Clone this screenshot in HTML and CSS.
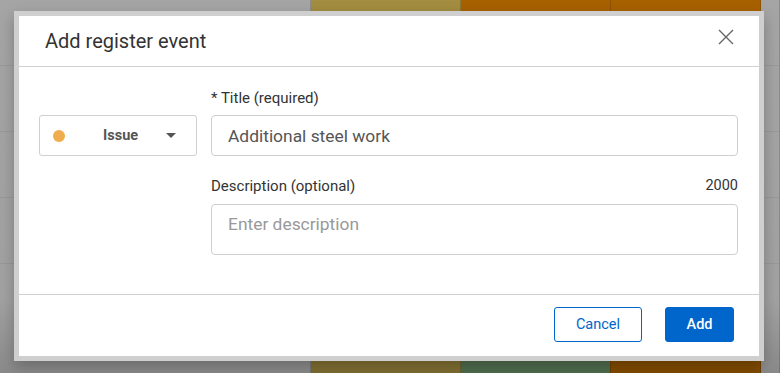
FILE: index.html
```html
<!DOCTYPE html>
<html lang="en">
<head>
    <meta charset="UTF-8">
    <meta name="viewport" content="width=device-width, initial-scale=1.0">
    <title>Add register event</title>
    <link rel="stylesheet" href="styles.css">
</head>
<body>

    <!-- Board behind the dialog -->
    <div class="board">
        <div class="lane lane-gray">
            <div class="cell"></div><div class="cell"></div><div class="cell"></div><div class="cell"></div>
        </div>
        <div class="lane lane-olive"></div>
        <div class="lane lane-orange"><div class="lane-foot foot-green"></div></div>
        <div class="lane lane-orange"><div class="lane-foot foot-orange"></div></div>
        <div class="lane lane-gray">
            <div class="cell"></div><div class="cell"></div><div class="cell"></div><div class="cell"></div>
        </div>
    </div>

    <div class="dialog-frame">
        <div class="dialog">
            <div class="dialog-header">
                <h2>Add register event</h2>
                <button class="close" aria-label="Close">
                    <svg width="16" height="16" viewBox="0 0 16 16">
                        <path d="M1 1 L15 15 M15 1 L1 15" stroke="#666" stroke-width="1.4" fill="none"/>
                    </svg>
                </button>
            </div>

            <form class="dialog-body" id="eventForm">
                <div class="type-select">
                    <span class="dot"></span>
                    <span class="type-name">Issue</span>
                    <span class="caret"></span>
                </div>
                <div class="fields">
                    <label for="title">* Title (required)</label>
                    <input type="text" id="title" value="Additional steel work">
                    <div class="label-row">
                        <label for="description">Description (optional)</label>
                        <span class="counter">2000</span>
                    </div>
                    <textarea id="description" placeholder="Enter description"></textarea>
                </div>
            </form>

            <div class="dialog-footer">
                <button class="btn btn-outline">Cancel</button>
                <button class="btn btn-primary">Add</button>
            </div>
        </div>
    </div>

</body>
</html>
```

FILE: styles.css
```css
body {
    margin: 0;
    font-family: Roboto, 'Noto Sans', sans-serif;
    color: #333;
    background-color: #a4a4a4;
    height: 373px;
    overflow: hidden;
}

/* Board columns behind the dialog */
.board {
    display: grid;
    grid-template-columns: 311px 150px 150px 150px 1fr;
    height: 373px;
}
.lane {
    display: flex;
    flex-direction: column;
    justify-content: flex-end;
    border-right: 1px solid rgba(0, 0, 0, 0.15);
}
.lane-gray {
    background: linear-gradient(#a5a5a5 0, #a2a2a2 300px, #8a8a8a 373px);
    justify-content: flex-start;
}
.lane-olive {
    background: linear-gradient(#a38d40 0, #a08a3e 300px, #7f6d32 373px);
}
.lane-orange {
    background: linear-gradient(#a86100 0, #a55f00 300px, #804a00 373px);
}
.lane-foot {
    height: 12px;
}
.foot-green {
    background-color: #4f6d4f;
}
.foot-orange {
    background-color: #824b00;
}
.cell {
    height: 65px;
    border-bottom: 1px solid rgba(0, 0, 0, 0.06);
}

/* Dialog */
.dialog-frame {
    position: absolute;
    left: 14px;
    top: 11px;
    width: 750px;
    height: 350px;
    box-sizing: border-box;
    padding: 5px;
    background-color: #cfcfcf;
    box-shadow: 0 6px 14px rgba(0, 0, 0, 0.25);
}
.dialog {
    background-color: #ffffff;
    height: 100%;
    display: flex;
    flex-direction: column;
}
.dialog-header {
    height: 50px;
    display: flex;
    align-items: center;
    justify-content: space-between;
    padding: 0 25px 0 26px;
    border-bottom: 1px solid #d0d0d0;
}
.dialog-header h2 {
    margin: 0;
    font-size: 20px;
    font-weight: 400;
    color: #333;
}
.close {
    background: none;
    border: none;
    padding: 0;
    margin-top: -8px;
    width: 16px;
    height: 16px;
    cursor: pointer;
}
.close svg {
    display: block;
}

.dialog-body {
    display: flex;
    gap: 14px;
    padding: 21px 21px 39px 20px;
    border-bottom: 1px solid #d0d0d0;
}
.type-select {
    margin-top: 27px;
    width: 158px;
    height: 41px;
    box-sizing: border-box;
    border: 1px solid #d0d0d0;
    border-radius: 3px;
    display: flex;
    align-items: center;
    padding: 0 20px 0 13px;
}
.dot {
    width: 12px;
    height: 12px;
    border-radius: 50%;
    background-color: #f0ad4e;
    margin-right: 38px;
}
.type-name {
    font-size: 14.5px;
    font-weight: 700;
    color: #555;
}
.caret {
    margin-left: auto;
    width: 0;
    height: 0;
    border-left: 5px solid transparent;
    border-right: 5px solid transparent;
    border-top: 5px solid #555;
}

.fields {
    flex: 1;
    display: flex;
    flex-direction: column;
}
label {
    font-size: 15px;
    line-height: 20px;
    color: #333;
}
.fields > label {
    margin-bottom: 7px;
}
.label-row {
    display: flex;
    justify-content: space-between;
    margin-top: 20px;
    margin-bottom: 8px;
    font-size: 15px;
    line-height: 20px;
}
.counter {
    font-size: 14.5px;
    color: #333;
}
input[type="text"], textarea {
    box-sizing: border-box;
    width: 100%;
    border: 1px solid #cfcfcf;
    border-radius: 4px;
    padding: 0 16px;
    font-family: Roboto, 'Noto Sans', sans-serif;
    font-size: 17.4px;
    color: #555;
}
input[type="text"] {
    height: 41px;
}
textarea {
    height: 51px;
    padding-top: 9px;
    resize: none;
    display: block;
}
textarea::placeholder {
    color: #999;
}

.dialog-footer {
    display: flex;
    justify-content: flex-end;
    gap: 23px;
    padding: 12px 25px 0 0;
}
.btn {
    height: 35px;
    border-radius: 3px;
    font-family: Roboto, 'Noto Sans', sans-serif;
    font-size: 14.5px;
    cursor: pointer;
}
.btn-outline {
    width: 88px;
    background-color: #ffffff;
    border: 1px solid #0066cc;
    color: #0066cc;
}
.btn-primary {
    width: 69px;
    background-color: #0066cc;
    border: 1px solid #0066cc;
    color: #ffffff;
    font-weight: 500;
}
```
